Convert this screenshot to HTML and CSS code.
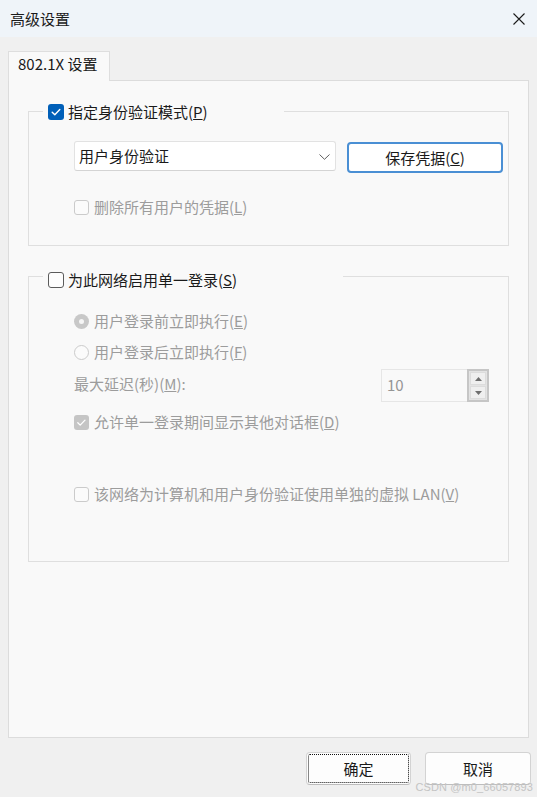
FILE: index.html
```html
<!DOCTYPE html>
<html lang="zh-CN">
<head>
<meta charset="utf-8">
<title>高级设置</title>
<link rel="stylesheet" href="styles.css">
</head>
<body>
<div class="window">
  <header class="titlebar">
    <span class="title">高级设置</span>
    <span class="close" aria-label="关闭">
      <svg width="12" height="12" viewBox="0 0 12 12"><path d="M0.5 0.5L11.5 11.5M11.5 0.5L0.5 11.5" stroke="#1b1b1b" stroke-width="1.1" fill="none"/></svg>
    </span>
  </header>
  <main class="content">
    <div class="tabs">
      <div class="tab">802.1X 设置</div>
    </div>
    <section class="panel">
      <fieldset class="group group-auth">
        <legend class="legend legend-auth">
          <span class="check">
            <span class="box box-lg box-checked">
              <svg width="16" height="16" viewBox="0 0 16 16"><path d="M4.2 8.3l2.6 2.5 5-5.4" stroke="#fff" stroke-width="1.4" fill="none" stroke-linecap="round" stroke-linejoin="round"/></svg>
            </span>
            <span class="label">指定身份验证模式(<u>P</u>)</span>
          </span>
        </legend>
        <div class="group-body body-auth">
          <div class="combo-row">
            <div class="combo">
              <span class="combo-text">用户身份验证</span>
              <svg class="chevron" width="11" height="6" viewBox="0 0 11 6"><path d="M0.5 0.5L5.5 5.3L10.5 0.5" stroke="#5f5f5f" stroke-width="1" fill="none"/></svg>
            </div>
            <button class="btn btn-save">保存凭据(<u>C</u>)</button>
          </div>
          <div class="check disabled row-delete">
            <span class="box box-off"></span>
            <span class="label">删除所有用户的凭据(<u>L</u>)</span>
          </div>
        </div>
      </fieldset>

      <fieldset class="group group-sso">
        <legend class="legend legend-sso">
          <span class="check">
            <span class="box box-lg box-empty"></span>
            <span class="label">为此网络启用单一登录(<u>S</u>)</span>
          </span>
        </legend>
        <div class="group-body body-sso">
          <div class="check disabled row-radio1">
            <span class="radio radio-on"><span class="dot"></span></span>
            <span class="label">用户登录前立即执行(<u>E</u>)</span>
          </div>
          <div class="check disabled row-radio2">
            <span class="radio radio-off"></span>
            <span class="label">用户登录后立即执行(<u>F</u>)</span>
          </div>
          <div class="delay-row disabled">
            <span class="label">最大延迟(秒)(<u>M</u>):</span>
            <div class="spin">
              <span class="spin-field">10</span>
              <span class="spin-buttons">
                <span class="spin-btn"><svg width="7" height="4" viewBox="0 0 7 4"><path d="M0 4L3.5 0L7 4Z" fill="#6e6e6e"/></svg></span>
                <span class="spin-btn"><svg width="7" height="4" viewBox="0 0 7 4"><path d="M0 0L3.5 4L7 0Z" fill="#6e6e6e"/></svg></span>
              </span>
            </div>
          </div>
          <div class="check disabled row-allow">
            <span class="box box-grey">
              <svg width="15" height="15" viewBox="0 0 15 15"><path d="M3.8 7.8l2.4 2.3 4.8-5" stroke="#fff" stroke-width="1.3" fill="none" stroke-linecap="round" stroke-linejoin="round"/></svg>
            </span>
            <span class="label">允许单一登录期间显示其他对话框(<u>D</u>)</span>
          </div>
          <div class="check disabled row-lan">
            <span class="box box-off"></span>
            <span class="label">该网络为计算机和用户身份验证使用单独的虚拟 LAN(<u>V</u>)</span>
          </div>
        </div>
      </fieldset>
    </section>
    <footer class="actions">
      <button class="btn btn-ok">确定</button>
      <button class="btn btn-cancel">取消</button>
    </footer>
  </main>
  <span class="watermark">CSDN @m0_66057893</span>
</div>
</body>
</html>
```

FILE: styles.css
```css
* { box-sizing: border-box; }

html, body {
  margin: 0;
  padding: 0;
}

body {
  width: 537px;
  height: 797px;
  overflow: hidden;
  background: #f0f0f0;
  font-family: "Noto Sans CJK SC", "Noto Sans", sans-serif;
  font-size: 15px;
  line-height: 20px;
  color: #1a1a1a;
}

.window {
  position: relative;
  width: 537px;
  height: 797px;
}

u { text-decoration: underline; text-underline-offset: 1px; text-decoration-thickness: 1px; }

/* title bar */
.titlebar {
  height: 37px;
  background: #eff4f9;
  display: flex;
  align-items: center;
  justify-content: space-between;
  padding: 0 12px 0 10px;
}
.title { font-size: 15px; line-height: 20px; }
.close { display: flex; width: 12px; height: 12px; margin-top: 1px; }

/* content */
.content {
  padding: 14px 8px 0 8px;
}

.tabs { display: flex; }
.tab {
  position: relative;
  width: 102px;
  height: 30px;
  margin-bottom: -1px;
  background: #f9f9f9;
  border: 1px solid #dedede;
  border-bottom: none;
  padding: 2px 0 0 9px;
  font-size: 15px;
  line-height: 20px;
}

.panel {
  height: 658px;
  background: #f9f9f9;
  border: 1px solid #dcdcdc;
  padding: 20px 19px 0 19px;
}

/* group boxes */
.group {
  margin: 0;
  padding: 0 0 0 14px;
  border: 1px solid #dfdfdf;
  min-inline-size: 0;
}
.group-sso { margin-top: 20px; }

.legend {
  padding: 0 0 0 5px;
  height: 21px;
  display: flex;
  align-items: center;
}
.legend-auth { width: 241px; }
.legend-sso { width: 300px; padding-top: 6px; }

.group-body { padding-left: 31px; }
.body-auth { padding-top: 19px; padding-bottom: 28px; }
.body-sso { padding-top: 24px; padding-bottom: 57px; }

.check {
  display: flex;
  align-items: center;
  gap: 5px;
  height: 20px;
  flex: none;
}
.legend .check { gap: 4px; }

.disabled { color: #9c9c9c; }

.box {
  width: 15px;
  height: 15px;
  border-radius: 3px;
  flex: none;
  display: flex;
}
.box-lg { width: 16px; height: 16px; border-radius: 3px; }
.box-checked { background: #005fb8; }
.box-empty { border: 1px solid #5b5b5b; background: #fdfdfd; }
.box-off { border: 1px solid #cbcbcb; background: #fbfbfb; }
.box-grey { background: #c5c5c5; }

.radio {
  width: 15px;
  height: 15px;
  border-radius: 50%;
  flex: none;
  display: flex;
  align-items: center;
  justify-content: center;
}
.radio-on { background: #c8c8c8; }
.radio-on .dot { width: 5px; height: 5px; border-radius: 50%; background: #f6f6f6; }
.radio-off { border: 1px solid #cbcbcb; background: #fbfbfb; }

/* combo row */
.combo-row {
  display: flex;
  align-items: flex-start;
  gap: 11px;
}
.combo {
  width: 262px;
  height: 30px;
  background: #ffffff;
  border: 1px solid #e2e2e2;
  border-bottom-color: #d4d4d4;
  border-radius: 3px;
  display: flex;
  align-items: center;
  justify-content: space-between;
  padding: 0 5px 0 4px;
}
.combo-text { line-height: 20px; }
.chevron { margin-top: 1px; }

.btn {
  font-family: inherit;
  font-size: 15px;
  line-height: 20px;
  color: #1a1a1a;
  background: #fdfdfd;
  border: 1px solid #d3d3d3;
  border-bottom-color: #bdbdbd;
  border-radius: 4px;
  padding: 0;
  display: flex;
  align-items: center;
  justify-content: center;
}
.btn-save {
  width: 156px;
  height: 31px;
  margin-top: 1px;
  border: 2px solid #4a8fd4;
  background: #ffffff;
}

.row-delete { margin-top: 24px; }

/* sso group */
.row-radio2 { margin-top: 11px; }

.delay-row {
  margin-top: 7px;
  width: 415px;
  height: 33px;
  display: flex;
  align-items: center;
  justify-content: space-between;
}
.delay-row .label { margin-top: -4px; }

.spin {
  width: 108px;
  height: 33px;
  display: flex;
}
.spin-field {
  flex: 1;
  background: #f9f9f9;
  border: 1px solid #e6e6e6;
  border-right: none;
  padding: 5px 0 0 5px;
  color: #959595;
  line-height: 20px;
}
.spin-buttons {
  width: 22px;
  border: 2px solid #c6c6c6;
  background: #e3e3e3;
  display: flex;
  flex-direction: column;
  gap: 1px;
  padding: 1px;
}
.spin-btn {
  flex: 1;
  background: #efefef;
  border: 1px solid #dcdcdc;
  display: flex;
  align-items: center;
  justify-content: center;
}

.row-allow { margin-top: 10px; }
.row-lan { margin-top: 52px; }

/* footer */
.actions {
  display: flex;
  justify-content: flex-end;
  gap: 14px;
  margin-top: 14px;
  margin-right: -2px;
}
.btn-ok {
  width: 105px;
  height: 33px;
  outline: 1px dotted #111;
  outline-offset: -3px;
}
.btn-cancel {
  width: 106px;
  height: 33px;
}

.watermark {
  position: absolute;
  right: 4px;
  bottom: 4px;
  font-family: "Liberation Sans", sans-serif;
  font-size: 11px;
  line-height: 12px;
  color: #c4c4c4;
  letter-spacing: 0.1px;
}
```
